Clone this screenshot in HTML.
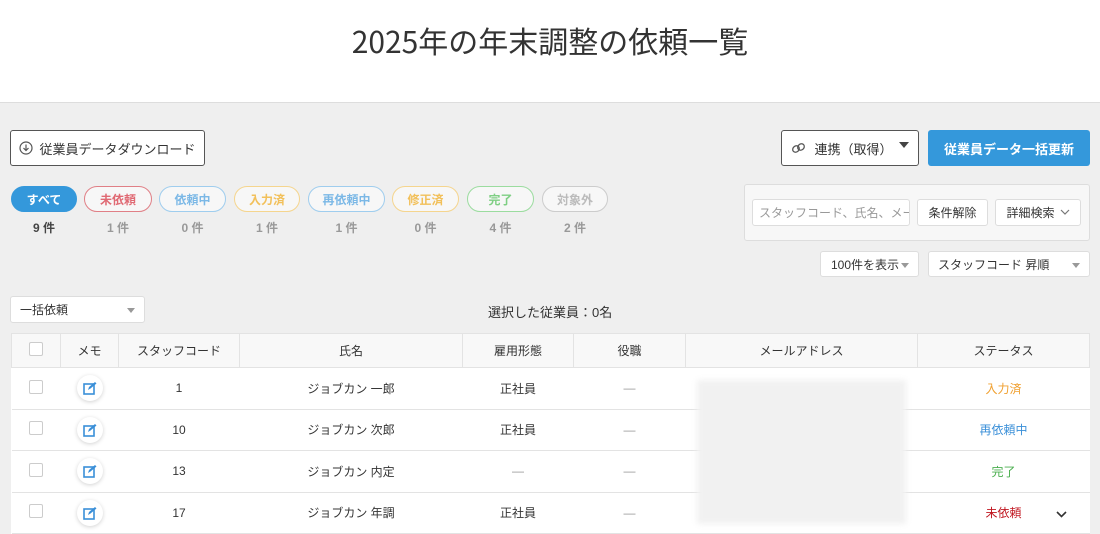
<!DOCTYPE html>
<html><head><meta charset="utf-8"><style>
*{box-sizing:border-box;margin:0;padding:0}
body{width:1100px;height:531px;overflow:hidden;background:#efefef;font-family:"Liberation Sans","Noto Sans CJK JP",sans-serif;color:#333;position:relative}
.a{position:absolute}
.hdr{left:0;top:0;width:1100px;height:103px;background:#fff;border-bottom:1px solid #ddd}
.hdr h1{position:absolute;left:0;right:0;top:18px;text-align:center;font-size:30px;font-weight:400;color:#333;font-family:"Noto Sans CJK JP",sans-serif}
.btn{background:#fff;border:1px solid #555;border-radius:3px;display:flex;align-items:center;justify-content:center;font-size:13px;color:#333}
.pill{top:186px;height:26px;border-radius:13px;border:1px solid;background:#f7f7f7;font-size:12px;font-weight:bold;display:flex;align-items:center;justify-content:center}
.cnt{top:219px;font-size:12px;color:#999;text-align:center;font-weight:bold}
.box{background:#fff;border:1px solid #ddd;border-radius:3px;font-size:12px;display:flex;align-items:center}
.caret{width:0;height:0;border-left:4px solid transparent;border-right:4px solid transparent;border-top:5px solid #999;position:absolute}
table{position:absolute;left:11px;top:333px;width:1079px;border-collapse:collapse;background:#fff;font-size:12px}
th{height:34px;background:#f8f8f8;font-weight:normal;border:1px solid #e3e3e3;color:#333}
td{height:41.5px;text-align:center;border-bottom:1px solid #e3e3e3}
.cb{display:inline-block;width:14px;height:14px;border:1px solid #ccc;border-radius:2px;background:#fff}
.memo{display:inline-block;width:26px;height:26px;border-radius:13px;background:#fff;box-shadow:0 1px 4px rgba(0,0,0,.18);vertical-align:middle;position:relative}
</style></head><body>
<div class="a hdr"><h1>2025年の年末調整の依頼一覧</h1></div>

<div class="a btn" style="left:10px;top:130px;width:195px;height:36px">
<svg width="14" height="14" viewBox="0 0 14 14" style="margin-right:6px"><circle cx="7" cy="7" r="6" fill="none" stroke="#555" stroke-width="1.2"/><path d="M7 3.5v6M4.5 7l2.5 2.5L9.5 7" fill="none" stroke="#555" stroke-width="1.2"/></svg>従業員データダウンロード</div>

<div class="a btn" style="left:781px;top:130px;width:138px;height:36px;font-size:13px">
<svg width="16" height="12" viewBox="0 0 16 12" style="margin-right:7px"><ellipse cx="5" cy="7" rx="3.5" ry="3" transform="rotate(-40 5 7)" fill="none" stroke="#555" stroke-width="1.3"/><ellipse cx="10" cy="5" rx="3.5" ry="3" transform="rotate(-40 10 5)" fill="none" stroke="#555" stroke-width="1.3"/></svg>連携（取得）<span style="display:inline-block;margin-left:6px;margin-top:-6px;border-left:5px solid transparent;border-right:5px solid transparent;border-top:6px solid #444"></span></div>
<div class="a" style="left:928px;top:130px;width:162px;height:36px;background:#3498db;border-radius:3px;color:#fff;font-size:13px;font-weight:bold;display:flex;align-items:center;justify-content:center">従業員データ一括更新</div>

<div class="a pill" style="left:11px;width:66px;background:#3498db;border-color:#3498db;color:#fff">すべて</div>
<div class="a pill" style="left:84px;width:68px;border-color:#e07f86;color:#e06a74">未依頼</div>
<div class="a pill" style="left:159px;width:67px;border-color:#9fcdee;color:#7bb8e6">依頼中</div>
<div class="a pill" style="left:234px;width:66px;border-color:#f5d58e;color:#f2c05a">入力済</div>
<div class="a pill" style="left:308px;width:77px;border-color:#9fcdee;color:#7bb8e6">再依頼中</div>
<div class="a pill" style="left:392px;width:67px;border-color:#f5d58e;color:#f2c05a">修正済</div>
<div class="a pill" style="left:467px;width:67px;border-color:#9bdc9f;color:#7fcf84">完了</div>
<div class="a pill" style="left:542px;width:66px;border-color:#ccc;color:#bbb">対象外</div>
<div class="a cnt" style="left:11px;width:66px;color:#444">9 件</div>
<div class="a cnt" style="left:84px;width:68px">1 件</div>
<div class="a cnt" style="left:159px;width:67px">0 件</div>
<div class="a cnt" style="left:234px;width:66px">1 件</div>
<div class="a cnt" style="left:308px;width:77px">1 件</div>
<div class="a cnt" style="left:392px;width:67px">0 件</div>
<div class="a cnt" style="left:467px;width:67px">4 件</div>
<div class="a cnt" style="left:542px;width:66px">2 件</div>

<div class="a" style="left:744px;top:184px;width:346px;height:57px;background:#f7f7f7;border:1px solid #ddd;border-radius:3px"></div>
<div class="a box" style="left:752px;top:199px;width:158px;height:27px;padding-left:6px;color:#999;overflow:hidden;white-space:nowrap">スタッフコード、氏名、メール</div>
<div class="a box" style="left:917px;top:199px;width:71px;height:27px;justify-content:center">条件解除</div>
<div class="a box" style="left:995px;top:199px;width:86px;height:27px;justify-content:center">詳細検索 <svg width="10" height="7" viewBox="0 0 10 7" style="margin-left:5px"><path d="M1 1l4 4 4-4" fill="none" stroke="#777" stroke-width="1.2"/></svg></div>

<div class="a box" style="left:820px;top:251px;width:99px;height:26px;padding-left:10px">100件を表示<span class="caret" style="left:80px;top:11px"></span></div>
<div class="a box" style="left:928px;top:251px;width:162px;height:26px;padding-left:9px">スタッフコード 昇順<span class="caret" style="left:143px;top:11px"></span></div>

<div class="a box" style="left:10px;top:296px;width:135px;height:27px;padding-left:9px">一括依頼<span class="caret" style="left:116px;top:11px"></span></div>
<div class="a" style="left:488px;top:302px;font-size:13px">選択した従業員：0名</div>

<table>
<tr><th style="width:49px"><span class="cb"></span></th><th style="width:58px">メモ</th><th style="width:121px">スタッフコード</th><th style="width:223px">氏名</th><th style="width:111px">雇用形態</th><th style="width:112px">役職</th><th style="width:232px">メールアドレス</th><th>ステータス</th></tr>
<tr><td><span class="cb"></span></td><td><span class="memo"><svg class="a" style="left:6px;top:6px" width="14" height="14" viewBox="0 0 14 14"><rect x="1" y="3" width="10" height="10" fill="none" stroke="#3a8fd8" stroke-width="1.6"/><path d="M5 9l1-3 6-5 1.5 1.5-6 5z" fill="#3a8fd8"/></svg></span></td><td>1</td><td>ジョブカン 一郎</td><td>正社員</td><td style="color:#999">—</td><td></td><td style="color:#f0a030">入力済</td></tr>
<tr><td><span class="cb"></span></td><td><span class="memo"><svg class="a" style="left:6px;top:6px" width="14" height="14" viewBox="0 0 14 14"><rect x="1" y="3" width="10" height="10" fill="none" stroke="#3a8fd8" stroke-width="1.6"/><path d="M5 9l1-3 6-5 1.5 1.5-6 5z" fill="#3a8fd8"/></svg></span></td><td>10</td><td>ジョブカン 次郎</td><td>正社員</td><td style="color:#999">—</td><td></td><td style="color:#3a8fd8">再依頼中</td></tr>
<tr><td><span class="cb"></span></td><td><span class="memo"><svg class="a" style="left:6px;top:6px" width="14" height="14" viewBox="0 0 14 14"><rect x="1" y="3" width="10" height="10" fill="none" stroke="#3a8fd8" stroke-width="1.6"/><path d="M5 9l1-3 6-5 1.5 1.5-6 5z" fill="#3a8fd8"/></svg></span></td><td>13</td><td>ジョブカン 内定</td><td style="color:#999">—</td><td style="color:#999">—</td><td></td><td style="color:#4caf50">完了</td></tr>
<tr><td><span class="cb"></span></td><td><span class="memo"><svg class="a" style="left:6px;top:6px" width="14" height="14" viewBox="0 0 14 14"><rect x="1" y="3" width="10" height="10" fill="none" stroke="#3a8fd8" stroke-width="1.6"/><path d="M5 9l1-3 6-5 1.5 1.5-6 5z" fill="#3a8fd8"/></svg></span></td><td>17</td><td>ジョブカン 年調</td><td>正社員</td><td style="color:#999">—</td><td></td><td style="color:#c0151f;position:relative">未依頼<svg class="a" style="left:138px;top:18px" width="11" height="7" viewBox="0 0 11 7"><path d="M1 1l4.5 4.5L10 1" fill="none" stroke="#333" stroke-width="1.6"/></svg></td></tr>
</table>
<div class="a" style="left:697px;top:380px;width:209px;height:144px;background:#f1f1f1;filter:blur(3px)"></div>
</body></html>
